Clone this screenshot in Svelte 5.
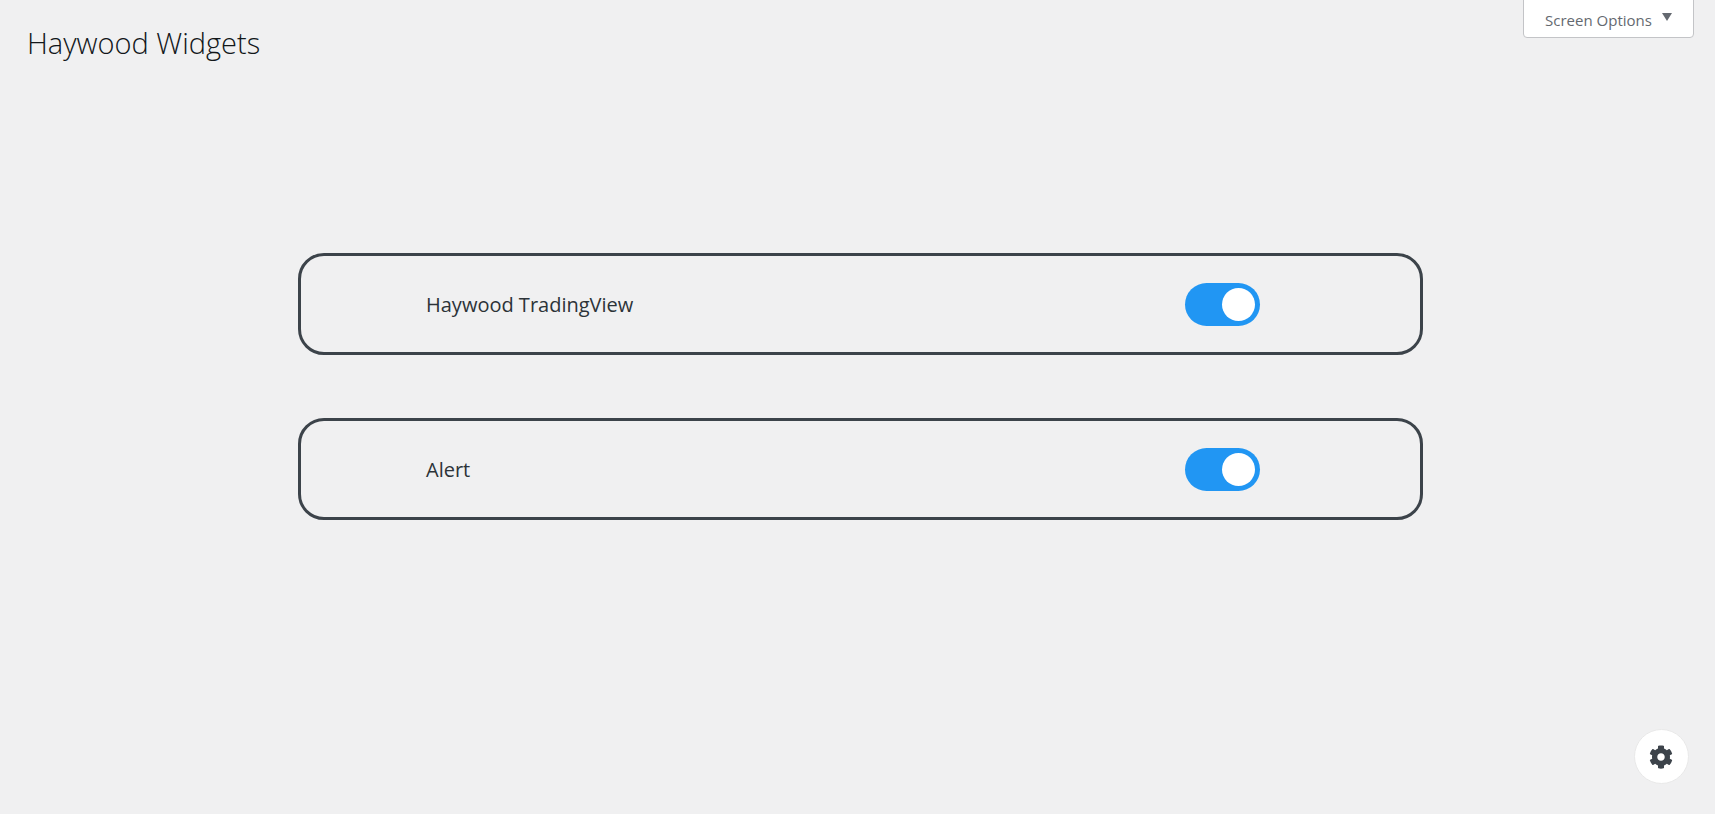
<script>
    let widgets = $state([
      { name: "Haywood TradingView", on: true },
      { name: "Alert", on: true }
    ]);
</script>

<div class="page">
  <header>
    <h1>Haywood Widgets</h1>
    <button class="screen-options">Screen Options <span class="arrow"></span></button>
  </header>

  <main>
    {#each widgets as w}
      <div class="card">
        <span class="name">{w.name}</span>
        <label class="switch">
          <input type="checkbox" bind:checked={w.on} />
          <span class="slider"></span>
        </label>
      </div>
    {/each}
  </main>

  <button class="fab" aria-label="Settings">
    <svg viewBox="0 0 512 512" width="24" height="24">
      <path fill="#3c434a" d="M487.4 315.7l-42.6-24.6c4.3-23.2 4.3-47 0-70.2l42.6-24.6c4.9-2.8 7.1-8.6 5.5-14-11.1-35.6-30-67.8-54.7-94.6-3.8-4.1-10-5.1-14.8-2.3L380.8 110c-17.9-15.4-38.5-27.3-60.8-35.1V25.8c0-5.6-3.9-10.5-9.4-11.7-36.7-8.2-74.3-7.8-109.2 0-5.5 1.2-9.4 6.1-9.4 11.7V75c-22.2 7.9-42.8 19.8-60.8 35.1L88.7 85.5c-4.9-2.8-11-1.9-14.8 2.3-24.7 26.7-43.6 58.9-54.7 94.6-1.7 5.4.6 11.2 5.5 14L67.3 221c-4.3 23.2-4.3 47 0 70.2l-42.6 24.6c-4.9 2.8-7.1 8.6-5.5 14 11.1 35.6 30 67.8 54.7 94.6 3.8 4.1 10 5.1 14.8 2.3l42.6-24.6c17.9 15.4 38.5 27.3 60.8 35.1v49.2c0 5.6 3.9 10.5 9.4 11.7 36.7 8.2 74.3 7.8 109.2 0 5.5-1.2 9.4-6.1 9.4-11.7v-49.2c22.2-7.9 42.8-19.8 60.8-35.1l42.6 24.6c4.9 2.8 11 1.9 14.8-2.3 24.7-26.7 43.6-58.9 54.7-94.6 1.5-5.5-.7-11.3-5.6-14.1zM256 336c-44.1 0-80-35.9-80-80s35.9-80 80-80 80 35.9 80 80-35.9 80-80 80z"/>
    </svg>
  </button>
</div>

<style>
    :global(body) {
      background: #f0f0f1;
      font-family: "Open Sans", "Noto Sans", sans-serif;
    }

    .page {
      height: 814px;
      overflow: hidden;
      box-sizing: border-box;
    }

    header {
      display: flex;
      justify-content: space-between;
      align-items: flex-start;
      padding: 0 21px 0 27px;
    }

    h1 {
      margin: 25px 0 0;
      font-size: 29px;
      line-height: 36px;
      font-weight: 300;
      color: #12171a;
    }

    .screen-options {
      width: 171px;
      height: 39px;
      box-sizing: border-box;
      margin-top: -1px;
      padding: 2px 0 0;
      background: #fff;
      border: 1px solid #c3c4c7;
      border-radius: 0 0 4px 4px;
      color: #646970;
      font-family: inherit;
      font-size: 15px;
      display: flex;
      align-items: center;
      justify-content: center;
      gap: 10px;
    }

    .arrow {
      width: 0;
      height: 0;
      margin-top: -6px;
      border-left: 5.5px solid transparent;
      border-right: 5.5px solid transparent;
      border-top: 8px solid #646970;
    }

    main {
      display: flex;
      flex-direction: column;
      gap: 63px;
      width: 1125px;
      margin: 192px 0 0 298px;
    }

    .card {
      height: 102px;
      box-sizing: border-box;
      border: 3px solid #3c434a;
      border-radius: 26px;
      display: flex;
      align-items: center;
      justify-content: space-between;
      padding: 0 160px 0 125px;
    }

    .name {
      font-size: 20px;
      color: #2c3338;
      padding-top: 1px;
    }

    .switch {
      display: block;
      position: relative;
      width: 75px;
      height: 43px;
    }

    .switch input {
      position: absolute;
      opacity: 0;
      width: 0;
      height: 0;
    }

    .slider {
      position: absolute;
      inset: 0;
      background: #ccc;
      border-radius: 22px;
    }

    .slider::before {
      content: "";
      position: absolute;
      left: 4px;
      top: 5px;
      width: 33px;
      height: 33px;
      background: #fff;
      border-radius: 50%;
    }

    input:checked + .slider {
      background: #2196f3;
    }

    input:checked + .slider::before {
      transform: translateX(33px);
    }

    .fab {
      position: fixed;
      left: 1634px;
      top: 729px;
      width: 55px;
      height: 55px;
      padding: 0 1px 0 0;
      border: 1px solid #e8e8e8;
      border-radius: 50%;
      background: #fff;
      display: flex;
      align-items: center;
      justify-content: center;
    }
</style>
